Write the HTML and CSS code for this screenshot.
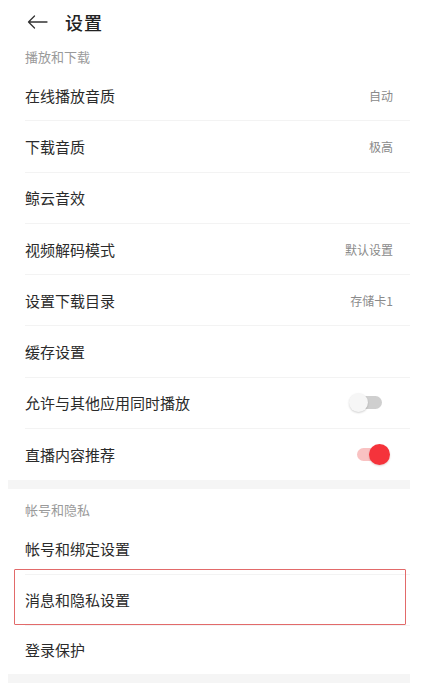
FILE: index.html
```html
<!DOCTYPE html>
<html>
<head>
    <meta charset="utf-8">
    <title>设置</title>
    <link rel="stylesheet" href="styles.css">
</head>
<body>
<div class="warper">

    <div class="topbar">
        <svg class="back" width="21" height="14" viewBox="0 0 21 14">
            <path d="M20 7 H1.5 M7.5 1 L1.5 7 L7.5 13" fill="none" stroke="#333" stroke-width="1.3" stroke-linecap="round" stroke-linejoin="round"/>
        </svg>
        <span class="pagetitle">设置</span>
    </div>

    <div class="group">
        <div class="label">播放和下载</div>
        <div class="row"><span class="name">在线播放音质</span><span class="value">自动</span></div>
        <div class="row"><span class="name">下载音质</span><span class="value">极高</span></div>
        <div class="row"><span class="name">鲸云音效</span></div>
        <div class="row"><span class="name">视频解码模式</span><span class="value">默认设置</span></div>
        <div class="row"><span class="name">设置下载目录</span><span class="value">存储卡1</span></div>
        <div class="row"><span class="name">缓存设置</span></div>
        <div class="row"><span class="name">允许与其他应用同时播放</span><span class="switch"><span class="knob"></span></span></div>
        <div class="row last"><span class="name">直播内容推荐</span><span class="switch on"><span class="knob"></span></span></div>
    </div>

    <div class="band"></div>

    <div class="group">
        <div class="label second">帐号和隐私</div>
        <div class="row"><span class="name">帐号和绑定设置</span></div>
        <div class="row marked"><span class="name">消息和隐私设置</span><span class="mark"></span></div>
        <div class="row last short"><span class="name">登录保护</span></div>
    </div>

    <div class="band"></div>
</div>
</body>
</html>
```

FILE: styles.css
```css
html, body
{
    margin: 0;
    padding: 0;
    background: #fff;
    font-family: "Noto Sans CJK SC", "Noto Sans", sans-serif;
    color: #2b2b2b;
}

.warper
{
    width: 402px;
    margin-left: 8px;
}

/* ========top bar======== */
.topbar
{
    height: 44px;
    display: flex;
    align-items: center;
    padding-left: 19px;
}
.back
{
    display: block;
    margin-right: 17px;
}
.pagetitle
{
    font-size: 18px;
    font-weight: 500;
    color: #222;
    letter-spacing: 1px;
}

/* ========lists======== */
.label
{
    height: 26px;
    line-height: 26px;
    padding-left: 17px;
    font-size: 13px;
    color: #9a9a9a;
}
.label.second
{
    padding-top: 8px;
}

.row
{
    position: relative;
    height: 50.3px;
    margin-left: 17px;
    padding-right: 17px;
    border-bottom: 1px solid #f3f3f3;
    display: flex;
    align-items: center;
    justify-content: space-between;
}
.row.last
{
    border-bottom: 0;
    height: 51.3px;
}
.row.last.short
{
    height: 48px;
}
.name
{
    font-size: 15px;
}
.value
{
    font-size: 12px;
    color: #8a8a8a;
}

/* ========switches======== */
.switch
{
    position: relative;
    width: 42px;
    height: 21px;
    margin-right: 2px;
}
.switch:before
{
    content: "";
    position: absolute;
    left: 6px;
    right: 9px;
    top: 4px;
    height: 13px;
    border-radius: 7px;
    background: #cfcfcf;
}
.knob
{
    position: absolute;
    left: 0;
    top: 1px;
    width: 19px;
    height: 19px;
    border-radius: 50%;
    background: #f6f6f6;
    box-shadow: rgba(0,0,0,0.18) 0px 1px 2px;
}
.switch.on:before
{
    left: 8px;
    background: #f9c2c2;
}
.switch.on .knob
{
    left: 20px;
    top: 0;
    width: 21px;
    height: 21px;
    background: #f5333b;
    box-shadow: rgba(120,0,0,0.2) 0px 1px 2px;
}

/* ========annotation box======== */
.mark
{
    position: absolute;
    left: -11px;
    right: 4px;
    top: -6px;
    bottom: 0;
    border: 1.5px solid #e26a6a;
    border-radius: 1px;
}

.band
{
    height: 9px;
    background: #f5f5f5;
}
```
